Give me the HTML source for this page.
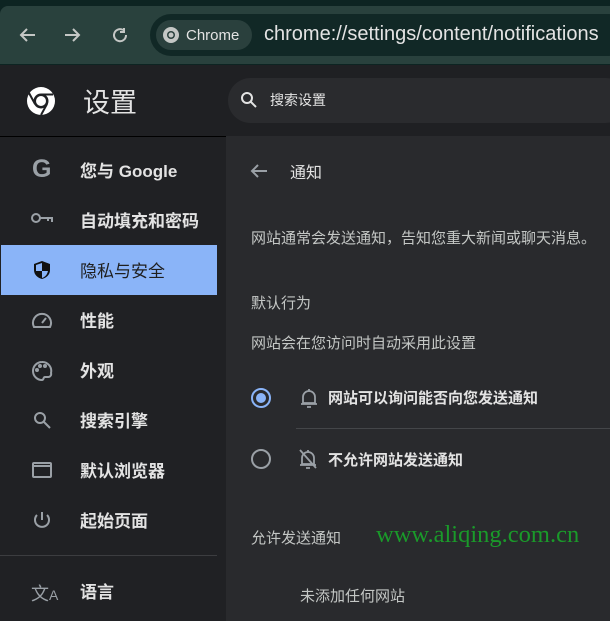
<!DOCTYPE html>
<html><head><meta charset="utf-8"><style>
*{margin:0;padding:0;box-sizing:border-box}
body{width:610px;height:621px;overflow:hidden;background:#202124;font-family:"Liberation Sans","Noto Sans CJK SC",sans-serif;color:#e3e3e3;position:relative}
.a{position:absolute}
.top{left:0;top:0;width:610px;height:65px;background:#0d2422}
.tb{left:0;top:6px;width:610px;height:58px;background:#29413d;border-radius:8px 0 0 0}
.omni{left:150px;top:14px;width:480px;height:42px;background:#112826;border-radius:21px}
.chip{left:156px;top:20px;width:96px;height:30px;background:#2a403d;border-radius:15px}
.hdr{left:0;top:65px;width:610px;height:71px;background:#1f2023}
.search{left:228px;top:78px;width:400px;height:45px;background:#2a2b2e;border-radius:23px}
.side{left:0;top:136px;width:226px;height:485px;background:#202124}
.main{left:226px;top:136px;width:384px;height:485px;background:#292a2d}
.item{position:absolute;left:80px;font-size:17px;color:#e3e3e3;font-weight:bold}
.sel{left:1px;top:245px;width:216px;height:50px;background:#8ab4f8}
.t{position:absolute;font-size:15px;color:#c4c7c5}
</style></head><body>
<div class="a top"></div><div class="a tb"></div>
<svg class="a" style="left:17px;top:25px" width="120" height="20" fill="none" stroke="#c4c7c5" stroke-width="2"><path d="M18 10H4M10 4L4 10l6 6"/><path d="M48 10h14M56 4l6 6-6 6"/><path d="M106 5a6 6 0 1 0 3 5M107 3v4h-4"/></svg>
<div class="a omni"></div><div class="a chip"></div>
<svg class="a" style="left:161px;top:25px" width="20" height="20"><circle cx="10" cy="10" r="8" fill="#c4c7c5"/><circle cx="10" cy="10" r="4" fill="#2a403d"/><circle cx="10" cy="10" r="2.5" fill="#c4c7c5"/></svg>
<div class="a" style="left:186px;top:27px;font-size:15px;color:#e3e3e3">Chrome</div>
<div class="a" style="left:264px;top:23px;font-size:20px;color:#e3e3e3;white-space:nowrap">chrome://settings/content/notifications</div>
<div class="a hdr"></div>
<svg class="a" style="left:25px;top:85px" width="32" height="32"><circle cx="16" cy="16" r="14" fill="#fff"/><circle cx="16" cy="16" r="7.5" fill="#1f2023"/><circle cx="16" cy="16" r="5" fill="#fff"/><path d="M16 9.5h12M10 19L4 8M22 19l-6 11" stroke="#1f2023" stroke-width="2"/></svg>
<div class="a" style="left:83px;top:81px;font-size:27px;color:#e3e3e3">设置</div>
<div class="a search"></div>
<svg class="a" style="left:240px;top:91px" width="18" height="18" fill="none" stroke="#e3e3e3" stroke-width="2"><circle cx="7" cy="7" r="5"/><path d="M11 11l5 5"/></svg>
<div class="a" style="left:270px;top:90px;font-size:14px;color:#e3e3e3">搜索设置</div>
<div class="a side"></div>
<div class="a" style="left:0;top:136px;width:226px;height:1px;background:#000"></div>
<div class="a main"></div>
<div class="a sel"></div>
<div class="a" style="left:32px;top:155px;font-size:25px;font-weight:bold;color:#9aa0a6">G</div>
<svg class="a" style="left:30px;top:210px" width="24" height="16" fill="none" stroke="#9aa0a6" stroke-width="2"><circle cx="6" cy="8" r="4"/><path d="M10 8h12v4M18 8v3"/></svg>
<svg class="a" style="left:33px;top:260px" width="18" height="20"><path d="M9 1l8 3v6c0 5-4 8-8 9-4-1-8-4-8-9V4z" fill="#111"/><path d="M9 3v8H3V5zM9 11h6c-1 4-3 6-6 7z" fill="#8ab4f8"/></svg>
<svg class="a" style="left:31px;top:310px" width="22" height="20" fill="none" stroke="#9aa0a6" stroke-width="2"><path d="M3 17a9 9 0 1 1 16 0z"/><path d="M11 13l4-5"/></svg>
<svg class="a" style="left:31px;top:360px" width="22" height="22" fill="none" stroke="#9aa0a6" stroke-width="2"><path d="M11 2a9 9 0 0 0 0 18c2 0 1-3 3-3h3a3 3 0 0 0 3-4A9 9 0 0 0 11 2z"/><circle cx="6" cy="10" r="1" fill="#9aa0a6"/><circle cx="9" cy="6" r="1" fill="#9aa0a6"/><circle cx="14" cy="6" r="1" fill="#9aa0a6"/></svg>
<svg class="a" style="left:33px;top:411px" width="18" height="18" fill="none" stroke="#9aa0a6" stroke-width="2"><circle cx="7" cy="7" r="5"/><path d="M11 11l6 6"/></svg>
<svg class="a" style="left:31px;top:461px" width="22" height="18" fill="none" stroke="#9aa0a6" stroke-width="2"><rect x="2" y="2" width="18" height="14" rx="1"/><path d="M2 5h18"/></svg>
<svg class="a" style="left:32px;top:510px" width="20" height="20" fill="none" stroke="#9aa0a6" stroke-width="2"><path d="M10 2v8M5 5a7 7 0 1 0 10 0"/></svg>
<div class="a" style="left:0;top:555px;width:217px;height:1px;background:#3c3d40"></div>
<div class="a" style="left:31px;top:580px;font-size:18px;color:#9aa0a6">文<span style="font-size:14px">A</span></div>
<div class="item" style="top:157px">您与 Google</div>
<div class="item" style="top:207px">自动填充和密码</div>
<div class="item" style="top:257px;color:#1f1f1f;font-weight:normal">隐私与安全</div>
<div class="item" style="top:307px">性能</div>
<div class="item" style="top:357px">外观</div>
<div class="item" style="top:407px">搜索引擎</div>
<div class="item" style="top:457px">默认浏览器</div>
<div class="item" style="top:507px">起始页面</div>
<div class="item" style="top:578px">语言</div>
<svg class="a" style="left:249px;top:162px" width="20" height="18" fill="none" stroke="#9aa0a6" stroke-width="2"><path d="M18 9H3M9 3L3 9l6 6"/></svg>
<div class="t" style="left:290px;top:159px;color:#e3e3e3;font-size:16px">通知</div>
<div class="t" style="left:251px;top:227px;white-space:nowrap">网站通常会发送通知，告知您重大新闻或聊天消息。</div>
<div class="t" style="left:251px;top:292px">默认行为</div>
<div class="t" style="left:251px;top:332px">网站会在您访问时自动采用此设置</div>
<svg class="a" style="left:250px;top:387px" width="22" height="22"><circle cx="11" cy="11" r="9" fill="none" stroke="#8ab4f8" stroke-width="2"/><circle cx="11" cy="11" r="5" fill="#8ab4f8"/></svg>
<svg class="a" style="left:300px;top:387px" width="18" height="22" fill="none" stroke="#9aa0a6" stroke-width="1.8"><path d="M3 16V10a6 6 0 0 1 12 0v6zM1 17h16M7 20h4M9 2v2"/></svg>
<div class="t" style="left:328px;top:387px;color:#e3e3e3;font-weight:bold">网站可以询问能否向您发送通知</div>
<div class="a" style="left:296px;top:428px;width:314px;height:1px;background:#444649"></div>
<svg class="a" style="left:250px;top:448px" width="22" height="22"><circle cx="11" cy="11" r="9" fill="none" stroke="#9aa0a6" stroke-width="2"/></svg>
<svg class="a" style="left:298px;top:448px" width="20" height="22" fill="none" stroke="#9aa0a6" stroke-width="1.8"><path d="M4 16V10a6 6 0 0 1 12 0v6zM2 17h16M8 20h4M10 2v2M2 2l16 18"/></svg>
<div class="t" style="left:328px;top:449px;color:#e3e3e3;font-weight:bold">不允许网站发送通知</div>
<div class="t" style="left:251px;top:527px">允许发送通知</div>
<div class="a" style="left:376px;top:521px;font-family:'Liberation Serif',serif;font-size:24.5px;color:#1a9a2a;white-space:nowrap">www.aliqing.com.cn</div>
<div class="t" style="left:300px;top:585px">未添加任何网站</div>
</body></html>
